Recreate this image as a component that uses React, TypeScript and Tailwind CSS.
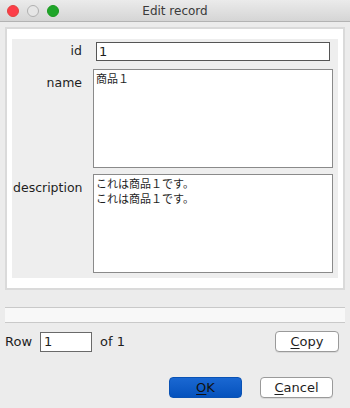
export default function App() {
  const ui = { fontFamily: '"DejaVu Sans", "Liberation Sans", sans-serif' };
  const jp = { fontFamily: '"DejaVu Sans", "Noto Sans CJK JP", sans-serif' };

  return (
    <div className="flex h-[408px] w-[350px] flex-col overflow-hidden bg-[#ececec] text-[#1e1e1e]" style={ui}>
      {/* title bar */}
      <div className="relative flex h-[22px] shrink-0 items-center justify-center border-b border-[#b3b3b3] bg-gradient-to-b from-[#ebebeb] to-[#d5d5d5]">
        <div className="absolute left-[7px] top-[5px] flex gap-[8px]">
          <span className="h-[12px] w-[12px] rounded-full border border-[#e0443e] bg-[#fc3d48]" />
          <span className="h-[12px] w-[12px] rounded-full border border-[#b0b0b0] bg-[#e6e6e6]" />
          <span className="h-[12px] w-[12px] rounded-full border border-[#1a9a1f] bg-[#1fa52a]" />
        </div>
        <span className="text-[12px] text-[#3a3a3a]">Edit record</span>
      </div>

      {/* form panel */}
      <div className="mx-[5px] mt-[5px] h-[263px] border-[2px] border-[#dadada] bg-white px-[5px] pt-[10px]">
        <div className="flex h-[239px] flex-col bg-[#eeeeee] pl-[1px] pt-[3px] text-[12.5px]">
          <div className="flex items-center">
            <div className="w-[70px] pr-[1px] text-right">id</div>
            <div className="ml-[13px] flex h-[19px] w-[234px] items-center border-[1.5px] border-[#555555] bg-white pl-[2px] text-[13px]">
              1
            </div>
          </div>
          <div className="mt-[8px] flex items-start">
            <div className="mt-[5px] w-[70px] pr-[1px] text-right">name</div>
            <div className="ml-[10px] h-[99px] w-[240px] border border-[#8a8a8a] bg-white pl-[2px] pt-[2px] text-[11px] leading-[15px]" style={jp}>
              商品１
            </div>
          </div>
          <div className="mt-[6px] flex items-start">
            <div className="mt-[5px] w-[70px] pr-[1px] text-right">description</div>
            <div className="ml-[10px] h-[99px] w-[240px] border border-[#8a8a8a] bg-white pl-[2px] pt-[2px] text-[11px] leading-[15px]" style={jp}>
              <div>これは商品１です。</div>
              <div>これは商品１です。</div>
            </div>
          </div>
        </div>
      </div>

      {/* separator strip */}
      <div className="mx-[5px] mt-[17px] h-[16px] border-y border-[#c9c9c9] bg-[#f8f8f8]" />

      {/* row controls */}
      <div className="mx-[5px] mt-[8px] flex items-center text-[13px]">
        <span>Row</span>
        <div className="ml-[8px] flex h-[20px] w-[52px] items-center border border-[#6a6a6a] bg-white pl-[3px]">1</div>
        <span className="ml-[8px]">of 1</span>
        <button className="ml-auto mr-[6px] flex h-[21px] w-[64px] items-center justify-center rounded-[4px] border border-[#9a9a9a] bg-white text-[13px] shadow-[0_1px_0_rgba(0,0,0,0.08)]">
          <span className="underline underline-offset-2">C</span>opy
        </button>
      </div>

      {/* dialog buttons */}
      <div className="mt-[25px] flex justify-end pr-[17px] text-[13px]">
        <button className="flex h-[21px] w-[73px] items-center justify-center rounded-[4px] border border-[#0a52b4] bg-gradient-to-b from-[#1a68d2] to-[#0552bd] text-[#111]">
          <span className="underline underline-offset-2">O</span>K
        </button>
        <button className="ml-[18px] flex h-[21px] w-[73px] items-center justify-center rounded-[4px] border border-[#9a9a9a] bg-white shadow-[0_1px_0_rgba(0,0,0,0.08)]">
          <span className="underline underline-offset-2">C</span>ancel
        </button>
      </div>
    </div>
  );
}
